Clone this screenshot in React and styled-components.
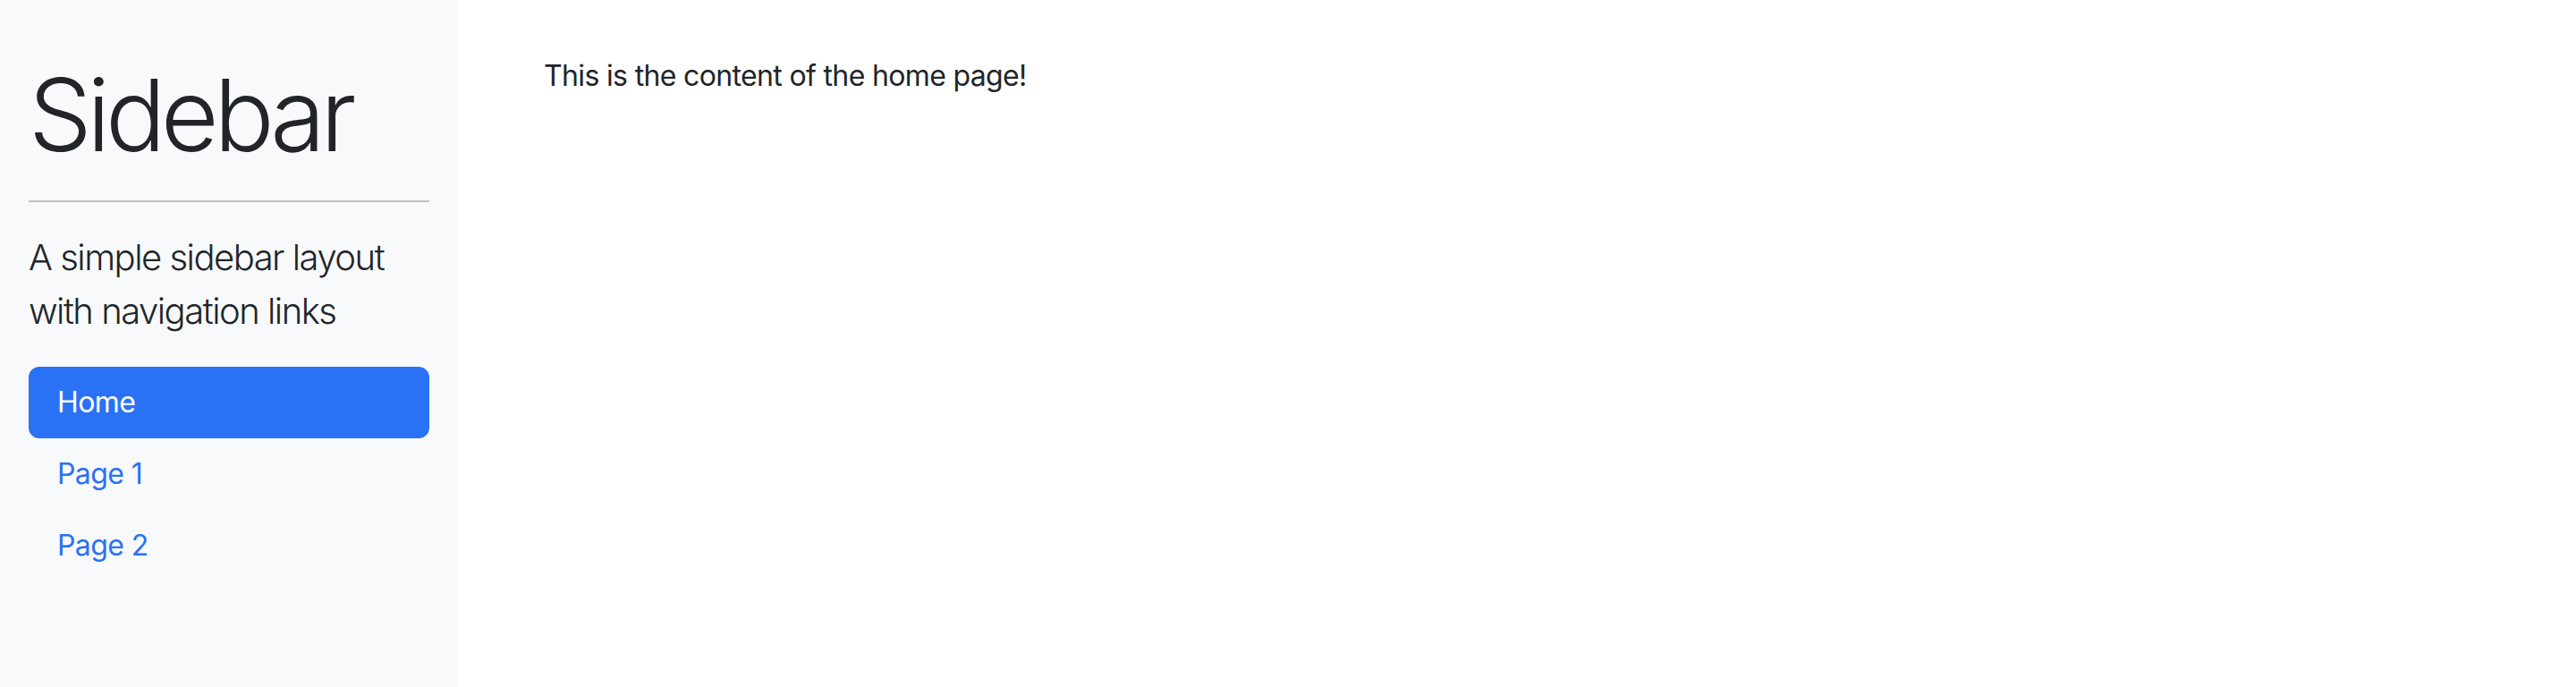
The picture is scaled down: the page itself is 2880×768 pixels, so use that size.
import React from "react";
import styled, { createGlobalStyle } from "styled-components";

const Global = createGlobalStyle`
  html, body { margin: 0; padding: 0; background: #ffffff; }
  body {
    font-family: Inter, "Noto Sans", "Liberation Sans", sans-serif;
    color: #212529;
    font-size: 32px;
    line-height: 1.5;
  }
  * { box-sizing: border-box; }
`;

const Layout = styled.div`
  display: flex;
  min-height: 768px;
`;

const Sidebar = styled.aside`
  width: 512px;
  flex: 0 0 512px;
  min-height: 768px;
  background: #f8f9fa;
  padding: 64px 32px;
  display: flex;
  flex-direction: column;
`;

const Title = styled.h2`
  margin: 0;
  font-size: 112px;
  font-weight: 300;
  line-height: 128px;
  letter-spacing: -5.5px;
`;

const Rule = styled.hr`
  margin: 32px 0;
  border: 0;
  border-top: 2px solid #212529;
  opacity: 0.25;
`;

const Lead = styled.p`
  margin: 0 0 32px;
  font-size: 40px;
  font-weight: 300;
  line-height: 1.5;
  letter-spacing: -1.5px;
`;

const Nav = styled.nav`
  display: flex;
  flex-direction: column;
`;

const NavLink = styled.a`
  display: block;
  padding: 16px 32px;
  font-size: 32px;
  line-height: 48px;
  border-radius: 12px;
  text-decoration: none;
  letter-spacing: -0.6px;
  color: ${(p) => (p.$active ? "#ffffff" : "#2a72f5")};
  background: ${(p) => (p.$active ? "#2a72f5" : "transparent")};
  cursor: pointer;
`;

const Content = styled.main`
  flex: 1;
  margin-left: 64px;
  margin-right: 64px;
  padding: 61px 32px;
`;

const Text = styled.p`
  margin: 0;
  font-size: 32px;
  line-height: 48px;
  letter-spacing: -0.65px;
`;

export default function App() {
  const links = [
    { label: "Home", active: true },
    { label: "Page 1" },
    { label: "Page 2" },
  ];
  return (
    <>
      <Global />
      <Layout>
        <Sidebar>
          <Title>Sidebar</Title>
          <Rule />
          <Lead>A simple sidebar layout with navigation links</Lead>
          <Nav>
            {links.map((l) => (
              <NavLink key={l.label} $active={l.active}>
                {l.label}
              </NavLink>
            ))}
          </Nav>
        </Sidebar>
        <Content>
          <Text>This is the content of the home page!</Text>
        </Content>
      </Layout>
    </>
  );
}
